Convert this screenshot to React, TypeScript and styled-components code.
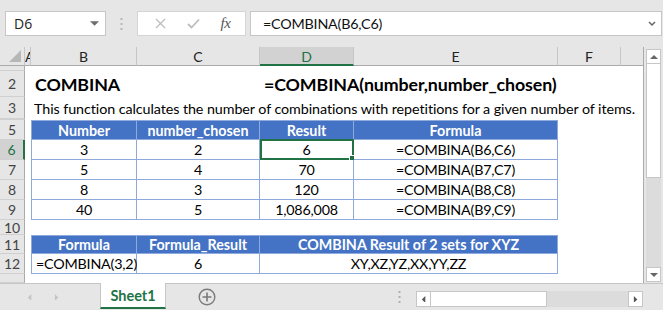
import React from "react";
import styled, { createGlobalStyle, css } from "styled-components";

const FONT = `Lato, "Open Sans", sans-serif`;
const GREEN = "#217346";
const BLUE = "#4472C4";
const LINE = "#8EA9DB";
const CHROME = "#e6e6e6";

const Global = createGlobalStyle`
  html, body { margin: 0; padding: 0; background: ${CHROME}; overflow: hidden; }
  body { font-family: ${FONT}; }
  * { box-sizing: border-box; }
`;

const Page = styled.div`
  width: 663px;
  height: 310px;
  display: flex;
  flex-direction: column;
  background: ${CHROME};
`;

/* ---------- formula bar ---------- */
const FormulaBar = styled.div`
  height: 47px;
  display: flex;
  align-items: flex-start;
  padding: 11px 1px 0 5px;
`;

const NameBox = styled.div`
  width: 101px;
  height: 25px;
  background: #fff;
  border: 1px solid #c6c6c6;
  display: flex;
  align-items: center;
  justify-content: space-between;
  padding: 0 6px 0 8px;
  font-family: "Open Sans", sans-serif;
  font-size: 14px;
  color: #222;
`;

const Grip = styled.div`
  width: 31px;
  height: 25px;
  display: flex;
  align-items: center;
  justify-content: center;
`;

const FxBox = styled.div`
  width: 109px;
  height: 25px;
  background: #fff;
  border: 1px solid #d4d4d4;
  display: flex;
  align-items: center;
  justify-content: space-around;
  padding: 0 4px 0 6px;
`;

const FxLabel = styled.span`
  font-family: "Liberation Serif", serif;
  font-style: italic;
  font-size: 15px;
  color: #555;
  letter-spacing: -0.5px;
`;

const FormulaInput = styled.div`
  flex: 1;
  margin-left: 4px;
  height: 25px;
  background: #fff;
  border: 1px solid #c6c6c6;
  display: flex;
  align-items: center;
  justify-content: space-between;
  padding: 0 5px 0 12px;
  font-family: ${FONT};
  font-size: 14.3px;
  letter-spacing: -0.2px;
  color: #111;
`;

/* ---------- sheet ---------- */
const SheetArea = styled.div`
  height: 236px;
  display: flex;
`;

const Grid = styled.div`
  width: 644px;
  height: 236px;
  display: grid;
  grid-template-columns: 25px 6px 106px 123px 94px 204px 63px 23px;
  grid-template-rows: 19px 5px 26px 22px 1px 20px 20px 20px 20px 20px 15px 19px 20px 9px;
  background: #fff;
  border-right: 1px solid #ababab;
  overflow: hidden;
  position: relative;
`;

type Pos = { $r: number; $c: number; $span?: number };

const place = css<Pos>`
  grid-row: ${(p) => p.$r};
  grid-column: ${(p) => p.$c} / span ${(p) => p.$span ?? 1};
`;

const Corner = styled.div`
  grid-row: 1;
  grid-column: 1;
  background: ${CHROME};
  border-right: 1px solid #c6c6c6;
  border-bottom: 1px solid #ababab;
  position: relative;
  &::after {
    content: "";
    position: absolute;
    right: 3px;
    bottom: 3px;
    width: 0;
    height: 0;
    border-left: 12px solid transparent;
    border-bottom: 12px solid #b7b7b7;
  }
`;

const ColHead = styled.div<Pos & { $sel?: boolean; $clip?: boolean }>`
  ${place};
  background: ${(p) => (p.$sel ? "#d2d2d2" : CHROME)};
  border-right: 1px solid #c6c6c6;
  border-bottom: ${(p) => (p.$sel ? `2px solid ${GREEN}` : "1px solid #ababab")};
  display: flex;
  align-items: center;
  justify-content: ${(p) => (p.$clip ? "flex-start" : "center")};
  overflow: hidden;
  font-size: 14px;
  padding-top: 1px;
  color: ${(p) => (p.$sel ? GREEN : "#222")};
`;

const RowHead = styled.div<Pos & { $sel?: boolean }>`
  ${place};
  background: ${(p) => (p.$sel ? "#d2d2d2" : CHROME)};
  border-right: ${(p) => (p.$sel ? `2px solid ${GREEN}` : "1px solid #ababab")};
  border-bottom: 1px solid #d0d0d0;
  display: flex;
  align-items: center;
  justify-content: center;
  overflow: hidden;
  font-size: 14px;
  color: ${(p) => (p.$sel ? GREEN : "#444")};
`;

const ClippedOne = styled.span`
  display: block;
  margin-top: 14px;
  line-height: 1;
`;

const TextCell = styled.div<Pos & { $big?: boolean }>`
  ${place};
  display: flex;
  align-items: center;
  white-space: nowrap;
  padding-left: ${(p) => (p.$big ? "4px" : "3px")};
  color: #000;
  font-size: ${(p) => (p.$big ? "17.8px" : "14.3px")};
  font-weight: ${(p) => (p.$big ? 700 : 400)};
  letter-spacing: ${(p) => (p.$big ? "-0.1px" : "-0.07px")};
`;

const TCell = styled.div<
  Pos & { $head?: boolean; $first?: boolean; $top?: boolean; $left?: boolean; $sel?: boolean }
>`
  ${place};
  position: relative;
  display: flex;
  align-items: center;
  justify-content: ${(p) => (p.$left ? "flex-start" : "center")};
  padding-left: ${(p) => (p.$left ? "4px" : "0")};
  white-space: nowrap;
  font-size: 14.3px;
  letter-spacing: ${(p) => (p.$head ? "0" : "-0.2px")};
  background: ${(p) => (p.$head ? BLUE : "#fff")};
  color: ${(p) => (p.$head ? "#fff" : "#000")};
  font-weight: ${(p) => (p.$head ? 700 : 400)};
  border-right: 1px solid ${LINE};
  border-bottom: 1px solid ${LINE};
  border-left: ${(p) => (p.$first ? `1px solid ${LINE}` : "none")};
  border-top: ${(p) => (p.$top ? `1px solid ${LINE}` : "none")};
  ${(p) =>
    p.$sel &&
    css`
      &::before {
        content: "";
        position: absolute;
        left: 0;
        top: -1px;
        right: -1px;
        bottom: -1px;
        border: 2px solid ${GREEN};
      }
      &::after {
        content: "";
        position: absolute;
        right: -4px;
        bottom: -4px;
        width: 6px;
        height: 6px;
        background: ${GREEN};
        border: 1px solid #fff;
      }
    `}
`;

/* ---------- vertical scrollbar ---------- */
const VScroll = styled.div`
  width: 19px;
  padding: 2px 2px 1px 2px;
  display: flex;
  flex-direction: column;
`;

const ScrollBtn = styled.div`
  width: 15px;
  height: 15px;
  background: #fff;
  border: 1px solid #c6c6c6;
  display: flex;
  align-items: center;
  justify-content: center;
  flex-shrink: 0;
`;

const VThumb = styled.div`
  width: 15px;
  height: 114px;
  background: #fff;
  border: 1px solid #c6c6c6;
  border-top: none;
`;

const VTrack = styled.div`
  flex: 1;
  background: #dcdcdc;
`;

/* ---------- tab bar ---------- */
const TabBar = styled.div`
  flex: 1;
  display: flex;
  align-items: stretch;
  border-top: 1px solid #c6c6c6;
`;

const NavArrows = styled.div`
  width: 100px;
  display: flex;
  align-items: center;
  padding-left: 27px;
  gap: 22px;
`;

const SheetTab = styled.div`
  width: 66px;
  margin-top: -1px;
  background: #fff;
  border-left: 1px solid #c6c6c6;
  border-right: 1px solid #c6c6c6;
  border-bottom: 2px solid ${GREEN};
  margin-bottom: 1px;
  display: flex;
  align-items: center;
  justify-content: center;
  font-weight: 700;
  font-size: 14.5px;
  color: ${GREEN};
`;

const AddSheet = styled.div`
  width: 82px;
  display: flex;
  align-items: center;
  justify-content: center;
`;

const TabSpacer = styled.div`
  width: 168px;
  display: flex;
  align-items: center;
  justify-content: flex-end;
  padding-right: 15px;
`;

const HScroll = styled.div`
  width: 227px;
  height: 16px;
  margin-top: 7px;
  display: flex;
`;

const HThumb = styled.div`
  width: 116px;
  height: 16px;
  background: #fff;
  border: 1px solid #c6c6c6;
  border-left: none;
`;

const HTrack = styled.div`
  flex: 1;
  background: #dcdcdc;
`;

const HBtn = styled(ScrollBtn)`
  height: 16px;
`;

const Dots = ({ color = "#9a9a9a" }: { color?: string }) => (
  <svg width="3" height="12" viewBox="0 0 3 12">
    <rect x="0.5" y="0" width="2" height="2" fill={color} />
    <rect x="0.5" y="5" width="2" height="2" fill={color} />
    <rect x="0.5" y="10" width="2" height="2" fill={color} />
  </svg>
);

const Tri = ({ dir, color = "#444", size = 7 }: { dir: "up" | "down" | "left" | "right"; color?: string; size?: number }) => {
  const pts =
    dir === "up"
      ? "0,5 4,1 8,5"
      : dir === "down"
      ? "0,1 4,5 8,1"
      : dir === "left"
      ? "5,0 1,4 5,8"
      : "1,0 5,4 1,8";
  const w = dir === "up" || dir === "down" ? 8 : 6;
  const h = dir === "up" || dir === "down" ? 6 : 8;
  return (
    <svg width={(w * size) / 7} height={(h * size) / 7} viewBox={`0 0 ${w} ${h}`}>
      <polygon points={pts} fill={color} />
    </svg>
  );
};

const table1 = [
  ["3", "2", "6", "=COMBINA(B6,C6)"],
  ["5", "4", "70", "=COMBINA(B7,C7)"],
  ["8", "3", "120", "=COMBINA(B8,C8)"],
  ["40", "5", "1,086,008", "=COMBINA(B9,C9)"],
];

const rowLabels: [number, string][] = [
  [3, "2"],
  [4, "3"],
  [6, "5"],
  [7, "6"],
  [8, "7"],
  [9, "8"],
  [10, "9"],
  [11, "10"],
  [12, "11"],
  [13, "12"],
];

export default function App() {
  return (
    <Page>
      <Global />
      <FormulaBar>
        <NameBox>
          <span>D6</span>
          <Tri dir="down" color="#6d6d6d" size={8} />
        </NameBox>
        <Grip>
          <Dots color="#b5b5b5" />
        </Grip>
        <FxBox>
          <svg width="11" height="11" viewBox="0 0 11 11">
            <path d="M1 1 L10 10 M10 1 L1 10" stroke="#bdbdbd" strokeWidth="1.3" />
          </svg>
          <svg width="13" height="11" viewBox="0 0 13 11">
            <path d="M1 6 L4.5 9.5 L12 1.5" stroke="#bdbdbd" strokeWidth="1.8" fill="none" />
          </svg>
          <FxLabel>fx</FxLabel>
        </FxBox>
        <FormulaInput>
          <span>=COMBINA(B6,C6)</span>
          <svg width="8" height="6" viewBox="0 0 8 6">
            <path d="M1 1 L4 4 L7 1" stroke="#666" strokeWidth="1.5" fill="none" />
          </svg>
        </FormulaInput>
      </FormulaBar>

      <SheetArea>
        <Grid>
          <Corner />
          <ColHead $r={1} $c={2} $clip>A</ColHead>
          <ColHead $r={1} $c={3}>B</ColHead>
          <ColHead $r={1} $c={4}>C</ColHead>
          <ColHead $r={1} $c={5} $sel>D</ColHead>
          <ColHead $r={1} $c={6}>E</ColHead>
          <ColHead $r={1} $c={7}>F</ColHead>
          <ColHead $r={1} $c={8} />

          <RowHead $r={2} $c={1}>
            <ClippedOne>1</ClippedOne>
          </RowHead>
          <RowHead $r={5} $c={1} />
          {rowLabels.map(([r, l]) => (
            <RowHead key={l} $r={r} $c={1} $sel={l === "6"}>
              {l}
            </RowHead>
          ))}
          <RowHead $r={14} $c={1} />

          <TextCell $r={3} $c={3} $big>
            COMBINA
          </TextCell>
          <TextCell $r={3} $c={5} $span={3} $big>
            =COMBINA(number,number_chosen)
          </TextCell>
          <TextCell $r={4} $c={3} $span={6}>
            This function calculates the number of combinations with repetitions for a given number of items.
          </TextCell>

          {["Number", "number_chosen", "Result", "Formula"].map((h, i) => (
            <TCell key={h} $r={6} $c={3 + i} $head $top $first={i === 0}>
              {h}
            </TCell>
          ))}
          {table1.map((row, ri) =>
            row.map((v, ci) => (
              <TCell
                key={`${ri}-${ci}`}
                $r={7 + ri}
                $c={3 + ci}
                $first={ci === 0}
                $sel={ri === 0 && ci === 2}
              >
                {v}
              </TCell>
            ))
          )}

          <TCell $r={12} $c={3} $head $top $first>
            Formula
          </TCell>
          <TCell $r={12} $c={4} $head $top>
            Formula_Result
          </TCell>
          <TCell $r={12} $c={5} $span={2} $head $top>
            COMBINA Result of 2 sets for XYZ
          </TCell>
          <TCell $r={13} $c={3} $first $left>
            =COMBINA(3,2)
          </TCell>
          <TCell $r={13} $c={4}>6</TCell>
          <TCell $r={13} $c={5} $span={2}>
            XY,XZ,YZ,XX,YY,ZZ
          </TCell>
        </Grid>
        <VScroll>
          <ScrollBtn>
            <Tri dir="up" color="#666" />
          </ScrollBtn>
          <VThumb />
          <VTrack />
          <ScrollBtn>
            <Tri dir="down" color="#666" />
          </ScrollBtn>
        </VScroll>
      </SheetArea>

      <TabBar>
        <NavArrows>
          <Tri dir="left" color="#c4c4c4" size={6} />
          <Tri dir="right" color="#c4c4c4" size={6} />
        </NavArrows>
        <SheetTab>Sheet1</SheetTab>
        <AddSheet>
          <svg width="18" height="18" viewBox="0 0 18 18">
            <circle cx="9" cy="9" r="7.8" stroke="#7a7a7a" strokeWidth="1.4" fill="none" />
            <path d="M9 4.5 V13.5 M4.5 9 H13.5" stroke="#7a7a7a" strokeWidth="1.6" />
          </svg>
        </AddSheet>
        <TabSpacer>
          <Dots color="#b0b0b0" />
        </TabSpacer>
        <HScroll>
          <HBtn>
            <Tri dir="left" color="#555" size={6} />
          </HBtn>
          <HThumb />
          <HTrack />
          <HBtn>
            <Tri dir="right" color="#555" size={6} />
          </HBtn>
        </HScroll>
      </TabBar>
    </Page>
  );
}
